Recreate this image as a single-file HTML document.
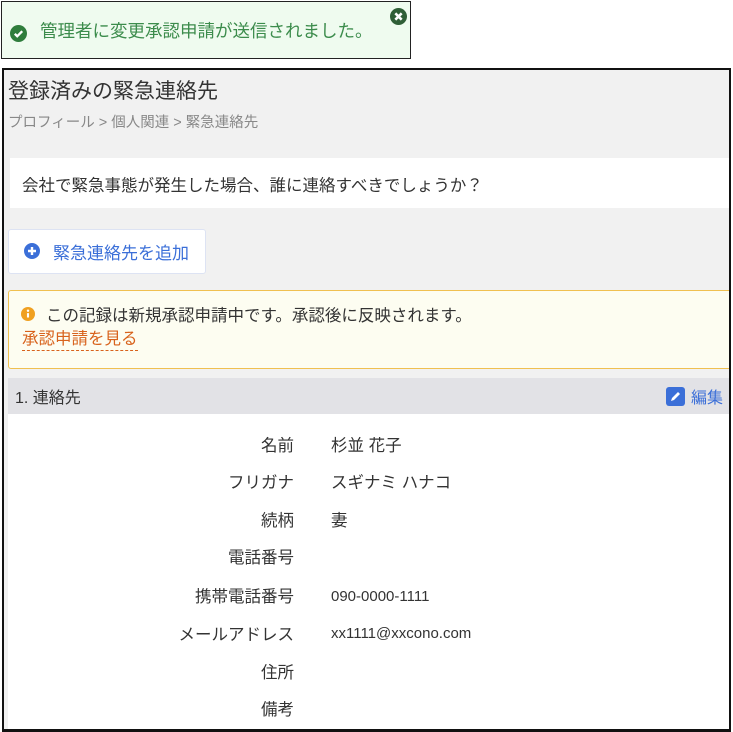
<!DOCTYPE html>
<html><head><meta charset="utf-8"><style>
*{margin:0;padding:0;box-sizing:border-box}
body{width:733px;height:732px;background:#fff;position:relative;overflow:hidden;font-family:"Liberation Sans","Noto Sans CJK JP",sans-serif;color:#333}
.a{position:absolute;white-space:nowrap}
#toast{left:1px;top:1px;width:410px;height:58px;border:1px solid #222;background:#effbef}
#frame{left:2px;top:68px;width:729px;height:664px;border:2px solid #111;border-bottom-width:3px;background:#f1f1f1;overflow:hidden}
.lbl{right:435px;font-size:16.5px;color:#333}
.val{left:327px;font-size:16.5px;color:#333}
</style></head><body>
<div class="a" id="toast"></div>
<svg class="a" style="left:10px;top:25px" width="17" height="17" viewBox="0 0 16 16"><circle cx="8" cy="8" r="8" fill="#2f7d3c"/><path d="M4.5 8.3l2.3 2.3 4.7-4.8" stroke="#fff" stroke-width="2.2" fill="none"/></svg>
<div class="a" style="left:40px;top:18px;font-size:17.5px;color:#3c8c4c">管理者に変更承認申請が送信されました。</div>
<svg class="a" style="left:390px;top:8px" width="17" height="17" viewBox="0 0 16 16"><circle cx="8" cy="8" r="8" fill="#2f5f37"/><path d="M5 5l6 6M11 5l-6 6" stroke="#fff" stroke-width="2.4"/></svg>
<div class="a" id="frame">
 <div class="a" style="left:4px;top:5px;font-size:21px;color:#333">登録済みの緊急連絡先</div>
 <div class="a" style="left:4px;top:41px;font-size:14.5px;color:#888">プロフィール &gt; 個人関連 &gt; 緊急連絡先</div>
 <div class="a" style="left:6px;top:88px;width:723px;height:50px;background:#fff"></div>
 <div class="a" style="left:18px;top:102px;font-size:16.5px;color:#333">会社で緊急事態が発生した場合、誰に連絡すべきでしょうか？</div>
 <div class="a" style="left:4px;top:159px;width:198px;height:45px;background:#fff;border:1px solid #dde3f3;border-radius:3px"></div>
 <svg class="a" style="left:20px;top:173px" width="16" height="16" viewBox="0 0 16 16"><circle cx="8" cy="8" r="8" fill="#3b6fd8"/><path d="M8 4v8M4 8h8" stroke="#fff" stroke-width="2.4"/></svg>
 <div class="a" style="left:49px;top:169px;font-size:17px;color:#3b6fd8">緊急連絡先を追加</div>
 <div class="a" style="left:4px;top:220px;width:730px;height:79px;background:#fdfdf1;border:1px solid #f0c050;border-radius:3px"></div>
 <svg class="a" style="left:17px;top:237px" width="14" height="14" viewBox="0 0 16 16"><circle cx="8" cy="8" r="8" fill="#f0a020"/><path d="M8 7v5" stroke="#fff" stroke-width="2.4"/><circle cx="8" cy="4.3" r="1.4" fill="#fff"/></svg>
 <div class="a" style="left:42px;top:232px;font-size:16.5px;color:#333">この記録は新規承認申請中です。承認後に反映されます。</div>
 <div class="a" style="left:18px;top:259px;font-size:16.5px;color:#d8621c;border-bottom:1px dashed #d8621c;line-height:21px">承認申請を見る</div>
 <div class="a" style="left:4px;top:308px;width:725px;height:36px;background:#e2e2e6"></div>
 <div class="a" style="left:11px;top:314px;font-size:16px;color:#333">1. 連絡先</div>
 <svg class="a" style="left:662px;top:317px" width="19" height="19" viewBox="0 0 19 19"><rect width="19" height="19" rx="3" fill="#3b6fd8"/><path d="M5 14l1-3 6-6 2 2-6 6z" fill="#fff"/></svg>
 <div class="a" style="left:687px;top:314px;font-size:16px;color:#3b6fd8">編集</div>
 <div class="a" style="left:4px;top:344px;width:725px;height:320px;background:#fff"></div>
 <div class="a lbl" style="top:362px">名前</div><div class="a val" style="top:362px">杉並 花子</div>
 <div class="a lbl" style="top:399px">フリガナ</div><div class="a val" style="top:399px">スギナミ ハナコ</div>
 <div class="a lbl" style="top:437px">続柄</div><div class="a val" style="top:437px">妻</div>
 <div class="a lbl" style="top:474px">電話番号</div>
 <div class="a lbl" style="top:513px">携帯電話番号</div><div class="a val" style="top:518px;font-size:15px">090-0000-1111</div>
 <div class="a lbl" style="top:551px">メールアドレス</div><div class="a val" style="top:555px;font-size:15px">xx1111@xxcono.com</div>
 <div class="a lbl" style="top:589px">住所</div>
 <div class="a lbl" style="top:626px">備考</div>
</div>
</body></html>
